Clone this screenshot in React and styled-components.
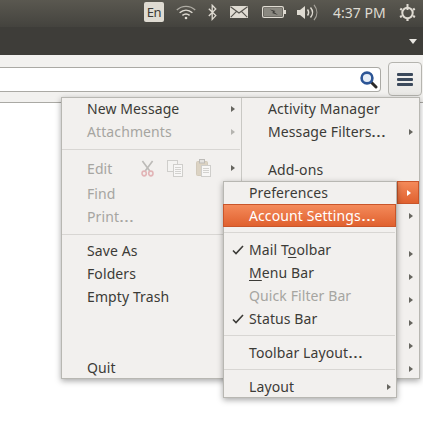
import React from "react";
import styled, { createGlobalStyle } from "styled-components";

const Global = createGlobalStyle`
  html, body { margin: 0; padding: 0; background: #fff; }
  body { font-family: "Noto Sans", "Open Sans", sans-serif; overflow: hidden; }
`;
const Page = styled.div`
  position: relative;
  width: 423px;
  height: 428px;
  overflow: hidden;
  background: #fff;
  display: flex;
  flex-direction: column;
`;
const Panel = styled.div`
  height: 27px;
  flex: none;
  background: linear-gradient(#5a5850, #44433e);
  display: flex;
  align-items: center;
  position: relative;
`;
const Tray = styled.div`
  display: flex;
  align-items: center;
  margin-left: 144px;
  height: 24px;
  margin-top: -3px;
`;
const Lang = styled.div`
  width: 20px;
  height: 20px;
  border-radius: 2px;
  background: #dfdbd2;
  color: #3c3b37;
  font-size: 13px;
  line-height: 20px;
  text-align: center;
  letter-spacing: -0.3px;
`;
const TrayIcon = styled.svg`
  display: block;
  flex: none;
  margin-left: ${(p) => p.$gap}px;
`;
const Clock = styled.div`
  color: #dfdbd2;
  font-size: 14px;
  margin-left: 15px;
  width: 54px;
  white-space: nowrap;
`;
const TitleBar = styled.div`
  height: 28px;
  flex: none;
  background: #3e3d39;
  display: flex;
  justify-content: flex-end;
  align-items: center;
  padding-right: 6px;
  box-sizing: border-box;
`;
const DownArrow = styled.div`
  width: 0;
  height: 0;
  border-left: 4px solid transparent;
  border-right: 4px solid transparent;
  border-top: 5px solid #e8e6e1;
  margin-top: 1px;
`;
const Toolbar = styled.div`
  height: 48px;
  flex: none;
  box-sizing: border-box;
  background: #f2f1ef;
  border-bottom: 1px solid #aaa9a4;
  display: flex;
  align-items: flex-start;
`;
const Search = styled.div`
  width: 381px;
  height: 25px;
  margin-top: 12px;
  flex: none;
  box-sizing: border-box;
  background: #fff;
  border: 1px solid #aaa9a4;
  border-left: none;
  border-radius: 0 4px 4px 0;
  display: flex;
  justify-content: flex-end;
  align-items: center;
  padding-right: 2px;
`;
const MenuButton = styled.div`
  width: 34px;
  height: 34px;
  margin: 7px 0 0 7px;
  flex: none;
  box-sizing: border-box;
  border: 1px solid #b5b4af;
  border-radius: 4px;
  background: linear-gradient(#f6f5f4, #e9e8e5);
  display: flex;
  flex-direction: column;
  align-items: center;
  justify-content: center;
  gap: 2px;
`;
const Bar = styled.div`
  width: 16px;
  height: 3px;
  border-radius: 1px;
  background: #3c4a5c;
`;
const Menu = styled.div`
  position: absolute;
  left: 61px;
  top: 97px;
  width: 359px;
  height: 282px;
  box-sizing: border-box;
  background: #f2f0ee;
  border: 1px solid #b8b7b2;
  box-shadow: 0 2px 6px rgba(0, 0, 0, 0.35);
  display: grid;
  grid-template-columns: 179px 1fr;
  overflow: visible;
`;
const Column = styled.div`
  display: flex;
  flex-direction: column;
  position: relative;
  height: 280px;
  ${(p) => p.$divided && "border-left: 1px solid #c9c8c4;"}
  & > :first-child {
    margin-top: -1px;
  }
`;
const Row = styled.div`
  flex: none;
  box-sizing: border-box;
  height: ${(p) => p.$h || 23}px;
  display: flex;
  align-items: center;
  padding-left: ${(p) => p.$pad}px;
  padding-right: ${(p) => p.$right || 0}px;
  padding-top: ${(p) => p.$top || 0}px;
  font-size: 14px;
  color: ${(p) => (p.$off ? "#a6a5a1" : "#3c3b37")};
  white-space: nowrap;
`;
const Label = styled.span`
  flex: 1;
  letter-spacing: 0.1px;
`;
const Dots = styled.span`
  display: inline-block;
  transform: scaleX(1.35);
  transform-origin: left center;
  margin-right: 4px;
`;
const Arrow = styled.div`
  width: 0;
  height: 0;
  flex: none;
  border-top: 3px solid transparent;
  border-bottom: 3px solid transparent;
  border-left: 4px solid ${(p) => (p.$light ? "#fff" : p.$off ? "#b5b4b0" : "#66655f")};
`;
const Sep = styled.div`
  flex: none;
  height: 1px;
  margin: ${(p) => p.$t || 0}px 1px ${(p) => p.$b || 0}px 0;
  background: #d8d6d3;
`;
const Spacer = styled.div`
  flex: none;
  height: ${(p) => p.$h}px;
`;
const EditIcons = styled.div`
  display: flex;
  gap: 13px;
  margin-right: 20px;
  align-items: center;
`;
const HotCell = styled.div`
  height: 23px;
  flex: none;
  width: 22px;
  margin-left: 155px;
  box-sizing: border-box;
  background: linear-gradient(#f48a5a, #e0612f);
  border: 1px solid #c9552a;
  display: flex;
  align-items: center;
  justify-content: center;
  padding-left: 2px;
`;
const Sub = styled.div`
  position: absolute;
  left: 223px;
  top: 181px;
  width: 174px;
  height: 217px;
  box-sizing: border-box;
  background: #f2f0ee;
  border: 1px solid #b8b7b2;
  box-shadow: 0 2px 6px rgba(0, 0, 0, 0.35);
  display: flex;
  flex-direction: column;
  & > :first-child {
    margin-top: -1px;
  }
`;
const SubRow = styled.div`
  flex: none;
  height: 23px;
  display: flex;
  align-items: center;
  font-size: 14px;
  padding-right: 5px;
  white-space: nowrap;
  color: ${(p) => (p.$off ? "#a6a5a1" : "#3c3b37")};
`;
const ActiveRow = styled(SubRow)`
  color: #fff;
  margin-left: -1px;
  background: linear-gradient(#f48a5a, #e0612f);
  border: 1px solid #c9552a;
  box-sizing: border-box;
`;
const CheckSlot = styled.div`
  width: 25px;
  flex: none;
  display: flex;
  justify-content: center;
  padding-left: 3px;
  box-sizing: border-box;
`;
const Mnemonic = styled.span`
  text-decoration: underline;
  text-underline-offset: 2px;
`;

const Check = () => (
  <svg width="12" height="10" viewBox="0 0 12 10" fill="none">
    <path d="M1 5.5 L4 8.5 L11 1" stroke="#3c3b37" strokeWidth="1.6" />
  </svg>
);

const Scissors = () => (
  <svg width="13" height="17" viewBox="0 0 14 17" fill="none" preserveAspectRatio="none">
    <path d="M1.5 1 L9.5 11 M12.5 1 L4.5 11" stroke="#bcbab7" strokeWidth="1.8" />
    <circle cx="3.4" cy="13.5" r="2.3" stroke="#e2b4b6" strokeWidth="1.7" />
    <circle cx="10.6" cy="13.5" r="2.3" stroke="#e2b4b6" strokeWidth="1.7" />
  </svg>
);
const CopyIcon = () => (
  <svg width="16" height="17" viewBox="0 0 16 17">
    <rect x="0.5" y="0.5" width="10" height="11" fill="#f4f3f1" stroke="#cfcecb" />
    <rect x="6.5" y="4.5" width="9" height="12" fill="#f8f7f6" stroke="#cfcecb" />
    <path d="M8 7.5h6M8 9.5h6M8 11.5h6M8 13.5h6" stroke="#d3d2cf" />
  </svg>
);
const PasteIcon = () => (
  <svg width="15" height="18" viewBox="0 0 15 18">
    <rect x="0.5" y="2.5" width="11" height="14" rx="1" fill="#dcd3c3" stroke="#d2cabb" />
    <rect x="3.5" y="0.5" width="5" height="3.5" fill="#e4e2df" stroke="#bdbbb7" />
    <rect x="5.5" y="6.5" width="9" height="11" fill="#f8f7f6" stroke="#cfcecb" />
    <path d="M7 9.5h6M7 11.5h6M7 13.5h6" stroke="#d3d2cf" />
  </svg>
);

const ArrowRow = () => (
  <Row $pad={26} $right={6}>
    <Label />
    <Arrow />
  </Row>
);

export default function App() {
  return (
    <Page>
      <Global />
      <Panel>
        <Tray>
          <Lang>En</Lang>
          <TrayIcon $gap={12} width="20" height="15" viewBox="0 0 20 15" fill="none" stroke="#dfdbd2" strokeWidth="1.4">
            <path d="M0.8 5 C6 0.2 14 0.2 19.2 5" opacity="0.65" />
            <path d="M3.6 7.8 C7.5 4.4 12.5 4.4 16.4 7.8" />
            <path d="M6.4 10.4 C8.8 8.6 11.2 8.6 13.6 10.4" />
            <circle cx="10" cy="13" r="1.3" fill="#dfdbd2" stroke="none" />
          </TrayIcon>
          <TrayIcon $gap={12} width="9" height="17" viewBox="0 0 9 17" fill="none" stroke="#dfdbd2" strokeWidth="1.3">
            <path d="M0.8 4.8 L7.8 11.6 L4.2 15.4 V1.2 L7.8 5 L0.8 12" />
          </TrayIcon>
          <TrayIcon $gap={13} width="18" height="12" viewBox="0 0 18 12">
            <rect width="18" height="12" rx="0.5" fill="#dfdbd2" />
            <path d="M0.5 0.8 L9 7 L17.5 0.8 M0.8 11.2 L6.5 5.4 M17.2 11.2 L11.5 5.4" stroke="#55534d" strokeWidth="1.1" fill="none" />
          </TrayIcon>
          <TrayIcon $gap={14} width="24" height="12" viewBox="0 0 24 12">
            <rect x="0.6" y="0.6" width="20.8" height="10.8" rx="1.5" fill="none" stroke="#dfdbd2" strokeWidth="1.2" />
            <rect x="2" y="2" width="18" height="8" fill="#8a8880" />
            <rect x="22" y="4" width="2" height="4" fill="#dfdbd2" />
            <path d="M8 3.5 L13.5 5 L12 6 L16 9 L10 7 L11.5 6 Z" fill="#3c3b37" />
          </TrayIcon>
          <TrayIcon $gap={11} width="21" height="17" viewBox="0 0 21 17" fill="none" stroke="#dfdbd2">
            <path d="M0 6 H3 L8 2 V15 L3 11 H0 Z" fill="#dfdbd2" stroke="none" />
            <path d="M10.5 5.5 C12 7.5 12 9.5 10.5 11.5" strokeWidth="1.5" />
            <path d="M13.5 3.5 C16 6.5 16 10.5 13.5 13.5" strokeWidth="1.4" />
            <path d="M17 0.8 C20.8 5.5 20.8 11.5 17 16.2" strokeWidth="1.2" opacity="0.6" />
          </TrayIcon>
          <Clock>4:37 PM</Clock>
          <TrayIcon $gap={12} width="17" height="17" viewBox="0 0 17 17" fill="none" stroke="#dfdbd2">
            <circle cx="8.5" cy="9" r="5.2" strokeWidth="2" />
            <path d="M8.5 0 V6" strokeWidth="2" />
            <path d="M1.2 4.8 L3 5.8 M15.8 4.8 L14 5.8 M1 13 L3 12 M16 13 L14 12 M8.5 15 V17" strokeWidth="2.2" />
          </TrayIcon>
        </Tray>
      </Panel>
      <TitleBar>
        <DownArrow />
      </TitleBar>
      <Toolbar>
        <Search>
          <svg width="19" height="19" viewBox="0 0 19 19" fill="none">
            <path d="M12 12 L17 17" stroke="#2a2a2a" strokeWidth="3" strokeLinecap="round" />
            <circle cx="8" cy="8" r="5.4" fill="#e6edf6" stroke="#2c5596" strokeWidth="2.6" />
          </svg>
        </Search>
        <MenuButton>
          <Bar />
          <Bar />
          <Bar />
        </MenuButton>
      </Toolbar>

      <Menu>
        <Column>
          <Row $pad={25} $right={6}>
            <Label>New Message</Label>
            <Arrow />
          </Row>
          <Row $pad={25} $right={6} $off>
            <Label>Attachments</Label>
            <Arrow $off />
          </Row>
          <Sep $t={6} />
          <Row $pad={25} $right={6} $h={32} $top={4} $off>
            <Label>Edit</Label>
            <EditIcons>
              <Scissors />
              <CopyIcon />
              <PasteIcon />
            </EditIcons>
            <Arrow />
          </Row>
          <Row $pad={25} $off>
            <Label>Find</Label>
          </Row>
          <Row $pad={25} $off>
            <Label>Print<Dots>…</Dots></Label>
          </Row>
          <Sep $t={6} $b={4} />
          <Row $pad={25}>
            <Label>Save As</Label>
          </Row>
          <Row $pad={25}>
            <Label>Folders</Label>
          </Row>
          <Row $pad={25}>
            <Label>Empty Trash</Label>
          </Row>
          <Spacer $h={48} />
          <Row $pad={25}>
            <Label>Quit</Label>
          </Row>
        </Column>
        <Column $divided>
          <Row $pad={26} $right={6}>
            <Label>Activity Manager</Label>
          </Row>
          <Row $pad={26} $right={6}>
            <Label>Message Filters<Dots>…</Dots></Label>
            <Arrow />
          </Row>
          <Spacer $h={15} />
          <Row $pad={26} $right={6}>
            <Label>Add-ons</Label>
          </Row>
          <HotCell>
            <Arrow $light />
          </HotCell>
          <ArrowRow />
          <Spacer $h={15} />
          <ArrowRow />
          <ArrowRow />
          <ArrowRow />
          <ArrowRow />
          <ArrowRow />
          <ArrowRow />
        </Column>
      </Menu>

      <Sub>
        <SubRow>
          <CheckSlot />
          <Label>Preferences</Label>
        </SubRow>
        <ActiveRow>
          <CheckSlot />
          <Label>Account Settings<Dots>…</Dots></Label>
        </ActiveRow>
        <Sep $t={5} $b={5} />
        <SubRow>
          <CheckSlot>
            <Check />
          </CheckSlot>
          <Label>
            Mail T<Mnemonic>o</Mnemonic>olbar
          </Label>
        </SubRow>
        <SubRow>
          <CheckSlot />
          <Label>
            <Mnemonic>M</Mnemonic>enu Bar
          </Label>
        </SubRow>
        <SubRow $off>
          <CheckSlot />
          <Label>Quick Filter Bar</Label>
        </SubRow>
        <SubRow>
          <CheckSlot>
            <Check />
          </CheckSlot>
          <Label>Status Bar</Label>
        </SubRow>
        <Sep $t={5} $b={5} />
        <SubRow>
          <CheckSlot />
          <Label>Toolbar Layout<Dots>…</Dots></Label>
        </SubRow>
        <Sep $t={5} $b={5} />
        <SubRow>
          <CheckSlot />
          <Label>Layout</Label>
          <Arrow />
        </SubRow>
      </Sub>
    </Page>
  );
}
